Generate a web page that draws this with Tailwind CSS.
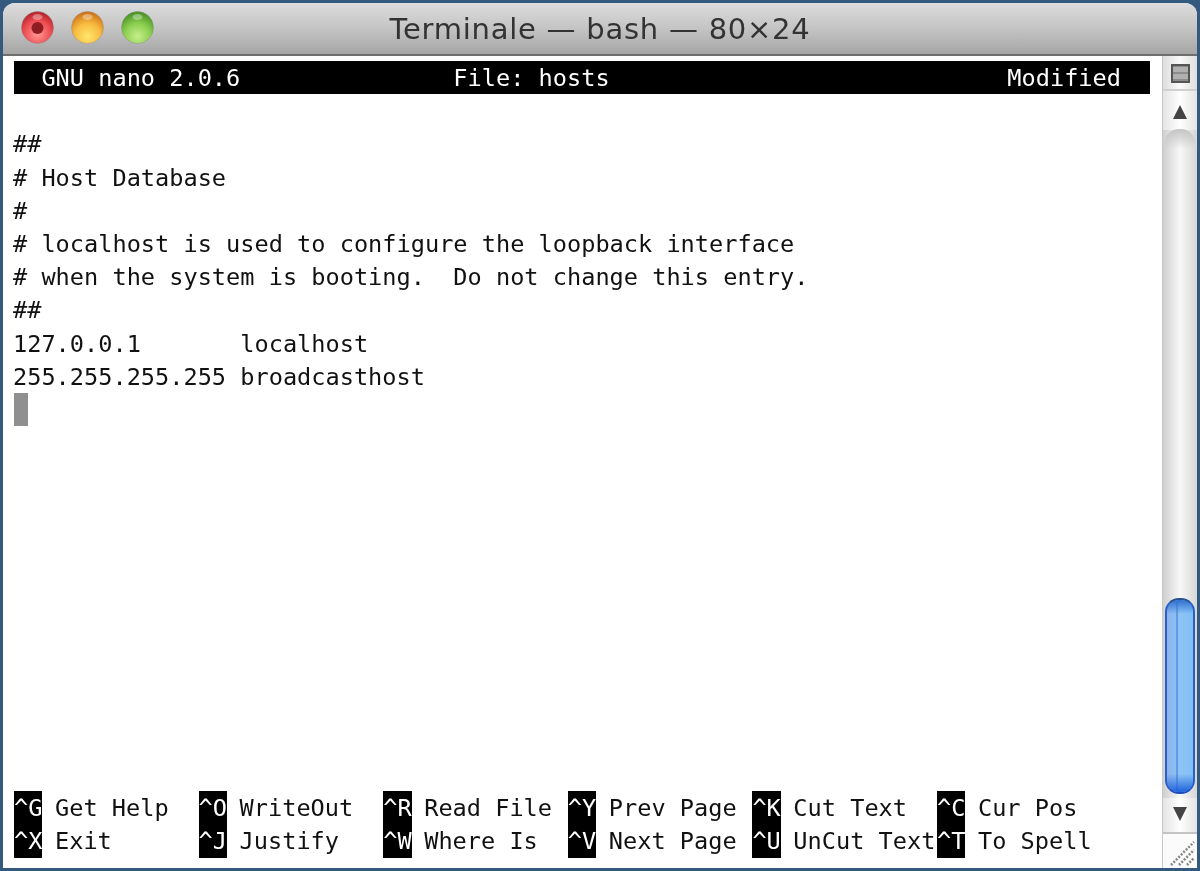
<!DOCTYPE html>
<html lang="it">
  <head>
    <meta charset="UTF-8" />
    <title>Terminale</title>
    <script src="https://cdn.jsdelivr.net/npm/@tailwindcss/browser@4"></script>
  </head>
  <body class="w-[1200px] h-[871px] overflow-hidden bg-[#34597f] pt-[3px] px-[3px] pb-[3px]">
    <div class="h-[865px] flex flex-col rounded-t-[12px] overflow-hidden bg-white">
      <!-- barra del titolo -->
      <div class="h-[53px] shrink-0 relative flex items-center justify-center bg-gradient-to-b from-[#dcdcdc] via-[#c4c4c4] to-[#a6a6a6] border-b-2 border-[#6e6e6e]">
        <div class="absolute left-[18px] top-[8px] flex gap-[17px] blur-[0.5px]">
          <svg width="33" height="33" viewBox="0 0 33 33">
            <defs>
              <radialGradient id="r" cx="50%" cy="70%" r="66%"><stop offset="0" stop-color="#ff9a94" /><stop offset="0.65" stop-color="#ec4a50" /><stop offset="1" stop-color="#b8242c" /></radialGradient>
              <radialGradient id="o" cx="50%" cy="78%" r="74%"><stop offset="0" stop-color="#ffe66e" /><stop offset="0.55" stop-color="#f8bc40" /><stop offset="1" stop-color="#d0741a" /></radialGradient>
              <radialGradient id="g" cx="50%" cy="78%" r="74%"><stop offset="0" stop-color="#c8ee8c" /><stop offset="0.55" stop-color="#8ccf50" /><stop offset="1" stop-color="#4a9426" /></radialGradient>
            </defs>
            <circle cx="16.5" cy="16.5" r="16" fill="url(#r)" stroke="#8a8a8a" stroke-opacity=".4" />
            <circle cx="16.5" cy="17" r="6" fill="#8e1c22" />
            <ellipse cx="16.5" cy="6" rx="5" ry="3" fill="#fff" fill-opacity=".35" />
          </svg>
          <svg width="33" height="33" viewBox="0 0 33 33">
            <circle cx="16.5" cy="16.5" r="16" fill="url(#o)" stroke="#8a8a8a" stroke-opacity=".4" />
            <ellipse cx="16.5" cy="6" rx="5" ry="3" fill="#fff" fill-opacity=".35" />
          </svg>
          <svg width="33" height="33" viewBox="0 0 33 33">
            <circle cx="16.5" cy="16.5" r="16" fill="url(#g)" stroke="#8a8a8a" stroke-opacity=".4" />
            <ellipse cx="16.5" cy="6" rx="5" ry="3" fill="#fff" fill-opacity=".35" />
          </svg>
        </div>
        <span class="font-['DejaVu_Sans',sans-serif] text-[29px] tracking-[0.75px] text-[#333] leading-none pt-[2px] blur-[0.4px]">Terminale — bash — 80×24</span>
      </div>

      <div class="flex-1 flex min-h-0">
        <!-- schermo: 80x24 celle -->
        <div class="w-[1159px] pt-[5px] pl-[11px] font-['DejaVu_Sans_Mono',monospace] text-[23.6px] leading-[35px] text-[#111] indent-[-1px] blur-[0.4px]">
          <div class="w-[1136px] h-[33.2px] whitespace-pre bg-black text-white">  GNU nano 2.0.6               File: hosts                            Modified</div>
          <div class="h-[33.2px]"></div>
          <div class="h-[33.2px] whitespace-pre">##</div>
          <div class="h-[33.2px] whitespace-pre"># Host Database</div>
          <div class="h-[33.2px] whitespace-pre">#</div>
          <div class="h-[33.2px] whitespace-pre"># localhost is used to configure the loopback interface</div>
          <div class="h-[33.2px] whitespace-pre"># when the system is booting.  Do not change this entry.</div>
          <div class="h-[33.2px] whitespace-pre">##</div>
          <div class="h-[33.2px] whitespace-pre">127.0.0.1       localhost</div>
          <div class="h-[33.2px] whitespace-pre">255.255.255.255 broadcasthost</div>
          <div class="h-[33.2px]"><div class="w-[14px] h-[33.2px] bg-[#8f8f8f]"></div></div>
          <div class="h-[365.2px]"></div>
          <!-- scorciatoie: 6 colonne da 13 celle -->
          <div class="grid grid-cols-[repeat(6,184.6px)] grid-rows-[33.2px_33.2px] grid-flow-col whitespace-pre indent-0">
            <div class="flex"><span class="w-[28.4px] bg-black text-white">^G</span><span class="ml-[12.6px]">Get Help</span></div>
            <div class="flex"><span class="w-[28.4px] bg-black text-white">^X</span><span class="ml-[12.6px]">Exit</span></div>
            <div class="flex"><span class="w-[28.4px] bg-black text-white">^O</span><span class="ml-[12.6px]">WriteOut</span></div>
            <div class="flex"><span class="w-[28.4px] bg-black text-white">^J</span><span class="ml-[12.6px]">Justify</span></div>
            <div class="flex"><span class="w-[28.4px] bg-black text-white">^R</span><span class="ml-[12.6px]">Read File</span></div>
            <div class="flex"><span class="w-[28.4px] bg-black text-white">^W</span><span class="ml-[12.6px]">Where Is</span></div>
            <div class="flex"><span class="w-[28.4px] bg-black text-white">^Y</span><span class="ml-[12.6px]">Prev Page</span></div>
            <div class="flex"><span class="w-[28.4px] bg-black text-white">^V</span><span class="ml-[12.6px]">Next Page</span></div>
            <div class="flex"><span class="w-[28.4px] bg-black text-white">^K</span><span class="ml-[12.6px]">Cut Text</span></div>
            <div class="flex"><span class="w-[28.4px] bg-black text-white">^U</span><span class="ml-[12.6px]">UnCut Text</span></div>
            <div class="flex"><span class="w-[28.4px] bg-black text-white">^C</span><span class="ml-[12.6px]">Cur Pos</span></div>
            <div class="flex"><span class="w-[28.4px] bg-black text-white">^T</span><span class="ml-[12.6px]">To Spell</span></div>
          </div>
        </div>

        <!-- barra di scorrimento -->
        <div class="w-[35px] shrink-0 flex flex-col border-l border-[#c8c8c8] bg-[#f4f4f4] blur-[0.4px]">
          <div class="h-[35px] shrink-0 flex items-center justify-center pl-[1px] pt-[1px] border-b-2 border-[#d0d0d0] bg-gradient-to-r from-[#dedede] via-[#fafafa] to-[#dedede]">
            <div class="w-[19px] h-[19px] bg-[#8c8c8c] border-2 border-[#555] flex flex-col justify-center gap-[2px]">
              <div class="h-[5px] bg-[#b0b0b0]"></div>
              <div class="h-[5px] bg-[#b0b0b0]"></div>
            </div>
          </div>
          <div class="h-[31px] shrink-0 flex justify-center pt-[14px] bg-gradient-to-r from-[#e4e4e4] via-[#ffffff] to-[#e4e4e4]">
            <svg width="16" height="15" viewBox="0 0 16 15"><path d="M8 0 L15 14 H1 Z" fill="#444" /></svg>
          </div>
          <!-- carreggiata -->
          <div class="flex-1 relative bg-gradient-to-r from-[#cfcfcf] via-[#f8f8f8] to-[#d6d6d6]">
            <div class="absolute inset-x-0 top-0 h-[8px] bg-gradient-to-r from-[#e4e4e4] via-[#ffffff] to-[#e4e4e4]"></div>
            <div class="absolute inset-x-[2px] top-[7px] h-[20px] rounded-t-[14px] bg-gradient-to-b from-[#c4c4c4] to-transparent"></div>
            <div class="absolute left-[2px] top-[476px] w-[30px] h-[196px] rounded-[14px] border-2 border-[#2a5fc8] border-t-[#27528f] border-b-[#1f4fbf] bg-gradient-to-r from-[#8cb4ec] via-[#8dc4f4] to-[#80c0f8] overflow-hidden">
              <div class="absolute left-[9px] inset-y-0 w-[2px] bg-[#5f9be6]"></div>
              <div class="absolute inset-x-0 top-0 h-[14px] bg-gradient-to-b from-[#2f6fd0] to-transparent"></div>
              <div class="absolute inset-x-0 bottom-0 h-[18px] bg-gradient-to-t from-[#1f63dc] to-transparent"></div>
            </div>
          </div>
          <div class="h-[36px] shrink-0 flex justify-center pt-[9px] bg-gradient-to-r from-[#e4e4e4] via-[#ffffff] to-[#e4e4e4] border-b-2 border-[#c4c4c4]">
            <svg width="16" height="15" viewBox="0 0 16 15"><path d="M1 0 H15 L8 14 Z" fill="#444" /></svg>
          </div>
          <div class="h-[34px] shrink-0 flex items-end justify-end bg-[#fbfbfb]">
            <svg width="30" height="30" viewBox="0 0 30 30"><path d="M4 27 L27 4 M12 27 L27 12 M20 27 L27 20" stroke="#888" stroke-width="2.5" stroke-dasharray="2 1.5" /></svg>
          </div>
        </div>
      </div>
    </div>
  </body>
</html>
